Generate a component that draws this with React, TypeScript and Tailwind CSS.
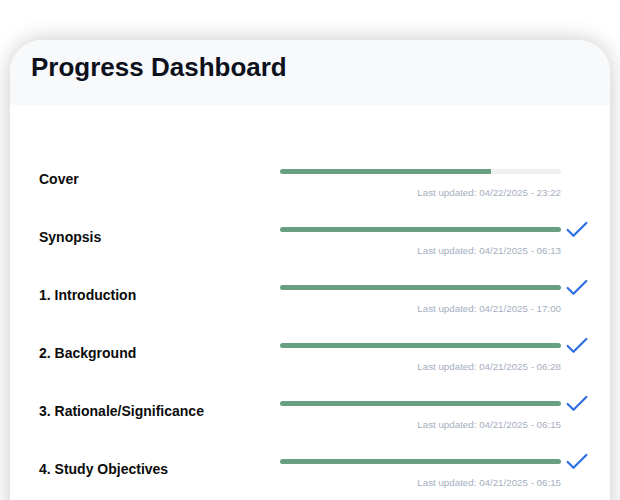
import { Check } from 'lucide-react';

type Section = {
  title: string;
  progress: number;
  updated: string;
  done: boolean;
};

const sections: Section[] = [
  { title: 'Cover', progress: 75, updated: '04/22/2025 - 23:22', done: false },
  { title: 'Synopsis', progress: 100, updated: '04/21/2025 - 06:13', done: true },
  { title: '1. Introduction', progress: 100, updated: '04/21/2025 - 17:00', done: true },
  { title: '2. Background', progress: 100, updated: '04/21/2025 - 06:28', done: true },
  { title: '3. Rationale/Significance', progress: 100, updated: '04/21/2025 - 06:15', done: true },
  { title: '4. Study Objectives', progress: 100, updated: '04/21/2025 - 06:15', done: true },
];

function ProgressRow({ section }: { section: Section }) {
  return (
    <div className="flex items-start pl-[29px] mb-[28px]">
      <div className="w-[241px] text-[14px] leading-5 font-bold text-[#0c0c0c]">
        {section.title}
      </div>
      <div>
        <div className="flex items-center gap-[2px] h-[5px]">
          <div className="w-[281px] h-[5px] rounded-full bg-[#eef0f1] overflow-hidden">
            <div className="h-full bg-[#689f80]" style={{ width: `${section.progress}%` }} />
          </div>
          {section.done ? (
            <Check className="w-[28px] h-[28px] shrink-0 text-[#2f6fe2]" strokeWidth={1.9} />
          ) : (
            <span className="w-[28px] h-[28px] shrink-0" />
          )}
        </div>
        <p className="w-[281px] mt-[13px] text-right text-[9.75px] leading-[12px] text-[#a5aec0]">
          Last updated: {section.updated}
        </p>
      </div>
    </div>
  );
}

export default function App() {
  return (
    <div className="min-h-[500px] bg-white pt-[40px] px-[10px] overflow-hidden font-['Liberation_Sans',Arial,sans-serif]">
      <div className="bg-white rounded-t-[32px] shadow-[0_0_22px_rgba(0,0,0,0.22)] overflow-hidden">
        <div className="bg-[#f8f9fb] pl-[21px] pt-[14px] pb-[25px]">
          <h1 className="text-[26px] leading-none font-bold text-[#0d111c]">Progress Dashboard</h1>
        </div>
        <div className="pt-[64px] pb-[20px]">
          {sections.map((s) => (
            <ProgressRow key={s.title} section={s} />
          ))}
        </div>
      </div>
    </div>
  );
}
